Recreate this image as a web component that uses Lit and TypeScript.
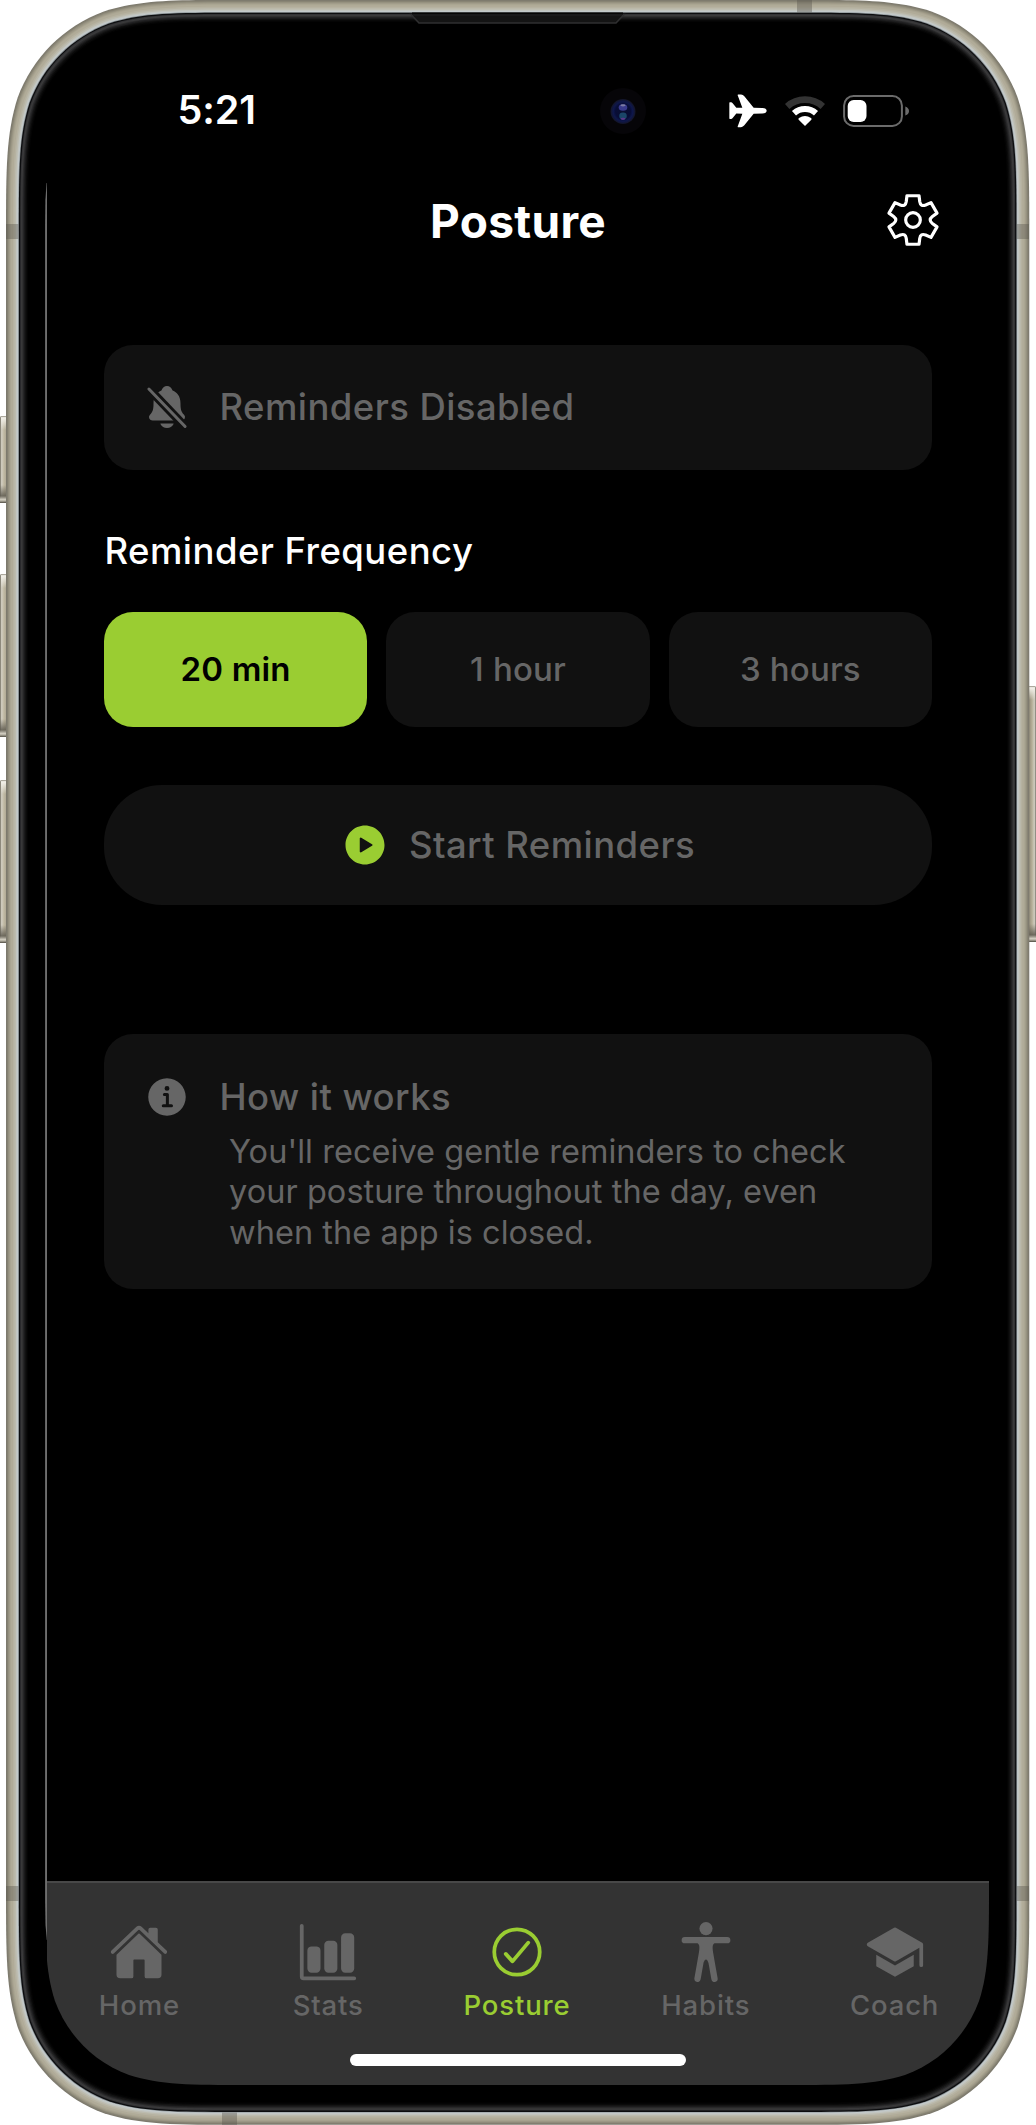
import { LitElement, html, svg, css, unsafeCSS } from "lit";
import { customElement, property, state } from "lit/decorators.js";

/** Rounded rectangle with continuous-curvature corners. */
function squircle(x: number, y: number, w: number, h: number, r: number): string {
  const a = 1.528665 * r, b = 1.08849296 * r, c = 0.86840694 * r, d = 0.63149379 * r;
  const e = 0.07491139 * r, f = 0.37282383 * r, g = 0.16905956 * r;
  const X = x + w, Y = y + h;
  const p = (m: number, n: number) => `${m.toFixed(2)} ${n.toFixed(2)}`;
  return [
    `M${p(x + a, y)}L${p(X - a, y)}`,
    `C${p(X - b, y)} ${p(X - c, y)} ${p(X - d, y + e)}`,
    `C${p(X - f, y + g)} ${p(X - g, y + f)} ${p(X - e, y + d)}`,
    `C${p(X, y + c)} ${p(X, y + b)} ${p(X, y + a)}`,
    `L${p(X, Y - a)}`,
    `C${p(X, Y - b)} ${p(X, Y - c)} ${p(X - e, Y - d)}`,
    `C${p(X - g, Y - f)} ${p(X - f, Y - g)} ${p(X - d, Y - e)}`,
    `C${p(X - c, Y)} ${p(X - b, Y)} ${p(X - a, Y)}`,
    `L${p(x + a, Y)}`,
    `C${p(x + b, Y)} ${p(x + c, Y)} ${p(x + d, Y - e)}`,
    `C${p(x + f, Y - g)} ${p(x + g, Y - f)} ${p(x + e, Y - d)}`,
    `C${p(x, Y - c)} ${p(x, Y - b)} ${p(x, Y - a)}`,
    `L${p(x, y + a)}`,
    `C${p(x, y + b)} ${p(x, y + c)} ${p(x + e, y + d)}`,
    `C${p(x + g, y + f)} ${p(x + f, y + g)} ${p(x + d, y + e)}`,
    `C${p(x + c, y)} ${p(x + b, y)} ${p(x + a, y)}Z`,
  ].join("");
}

/** Six-tooth gear outline around the origin. */
function gear(): string {
  const pt = (r: number, deg: number) => {
    const t = ((deg - 90) * Math.PI) / 180;
    return `${(r * Math.cos(t)).toFixed(2)} ${(r * Math.sin(t)).toFixed(2)}`;
  };
  let d = "";
  for (let k = 0; k < 6; k++) {
    const a = k * 60;
    d += `${k ? "L" : "M"}${pt(59, a - 20)}L${pt(75, a - 14)}L${pt(75, a + 14)}L${pt(59, a + 20)}`;
    d += `Q${pt(45, a + 30)} ${pt(59, a + 40)}`;
  }
  return d + "Z";
}

const SCREEN_CLIP = squircle(0, 0, 944, 2045, 133);

const ICONS: Record<string, unknown> = {
  home: svg`<path d="M261.56 101.28a8 8 0 00-11.06 0L66.4 277.15a8 8 0 00-2.47 5.79L63.9 448a32 32 0 0032 32H192a16 16 0 0016-16V328a8 8 0 018-8h80a8 8 0 018 8v136a16 16 0 0016 16h96.06a32 32 0 0032-32V282.94a8 8 0 00-2.47-5.79z"/><path d="M490.91 244.15l-74.8-71.56V64a16 16 0 00-16-16h-48a16 16 0 00-16 16v32l-57.92-55.38C272.77 35.14 264.71 32 256 32c-8.68 0-16.72 3.14-22.14 8.63l-212.7 203.5c-6.22 6-7 15.87-1.34 22.37A16 16 0 0043 267.56L250.5 69.28a8 8 0 0111.06 0l207.52 198.28a16 16 0 0022.59-.44c6.14-6.36 5.63-16.86-.76-22.97z"/>`,
  stats: svg`<path d="M480 496H48a32 32 0 01-32-32V32a16 16 0 0132 0v432h432a16 16 0 010 32z"/><path d="M156 432h-40a36 36 0 01-36-36V244a36 36 0 0136-36h40a36 36 0 0136 36v152a36 36 0 01-36 36zM300 432h-40a36 36 0 01-36-36V196a36 36 0 0136-36h40a36 36 0 0136 36v200a36 36 0 01-36 36zM443.64 432h-40a36 36 0 01-36-36V132a36 36 0 0136-36h40a36 36 0 0136 36v264a36 36 0 01-36 36z"/>`,
  posture: svg`<g fill="none" stroke="currentColor" stroke-width="32" stroke-linecap="round" stroke-linejoin="round"><circle cx="256" cy="256" r="194"/><path d="M352 176L217.6 336 160 272"/></g>`,
  habits: svg`<circle cx="256" cy="56" r="56"/><path d="M437,128H75a27,27,0,0,0,0,54H176.88c6.91,0,15,3.09,19.58,15,5.35,13.83,2.73,40.54-.57,61.23l-4.32,24.45a.42.42,0,0,1-.12.35l-34.6,196.81A27.43,27.43,0,0,0,179,511.58a27.06,27.06,0,0,0,31.42-22.29l23.91-136.8S242,320,256,320c14.23,0,21.74,32.49,21.74,32.49l23.92,136.92a27.24,27.24,0,1,0,53.62-9.6L320.66,283a.45.45,0,0,0-.11-.35l-4.33-24.45c-3.3-20.69-5.92-47.4-.57-61.23,4.56-11.88,12.91-15,19.26-15H437a27,27,0,0,0,0-54Z"/>`,
  coach: svg`<path d="M256 370.43L96 279v98.42l160 88.88 160-88.88V279z"/><path d="M264 49.5a16 16 0 00-16 0L23.500 178a16 16 0 000 28L248 334a16 16 0 0016 0l200-114.300V368a16 16 0 0032 0V192a16 16 0 00-8-14z"/>`,
  play: svg`<path d="M256 48C141.31 48 48 141.31 48 256s93.31 208 208 208 208-93.31 208-208S370.69 48 256 48zm74.77 217.3l-114.45 69.14a10.78 10.78 0 01-16.32-9.31V186.87a10.78 10.78 0 0116.32-9.31l114.45 69.14a10.89 10.89 0 010 18.6z"/>`,
  info: svg`<path d="M256 56C145.72 56 56 145.72 56 256s89.72 200 200 200 200-89.72 200-200S366.28 56 256 56zm0 82a26 26 0 11-26 26 26 26 0 0126-26zm48 226h-88a16 16 0 010-32h28v-88h-16a16 16 0 010-32h32a16 16 0 0116 16v104h28a16 16 0 010 32z"/>`,
  bellOff: svg`<mask id="cut"><rect width="512" height="512" fill="#fff"/><path d="M20 16L492 512" stroke="#000" stroke-width="92"/></mask><path mask="url(#cut)" d="M440.08 341.31c-1.66-2-3.29-4-4.89-5.93-22-26.61-35.31-42.67-35.31-118 0-39-9.33-71-27.72-95-13.56-17.73-31.89-31.18-56.05-41.12a3 3 0 01-.82-.67C306.6 51.49 282.82 32 256 32s-50.59 19.49-59.28 48.56a3.13 3.13 0 01-.81.65c-56.38 23.21-83.78 67.74-83.78 136.14 0 75.36-13.29 91.42-35.31 118-1.6 1.93-3.23 3.89-4.89 5.93a35.16 35.16 0 00-4.65 37.62c6.17 13 19.32 21.07 34.33 21.07H410.5c14.94 0 28-8.06 34.19-21a35.17 35.17 0 00-4.61-37.66z"/><path d="M256 480a80.06 80.06 0 0070.44-42.13 4 4 0 00-3.54-5.87H189.12a4 4 0 00-3.55 5.87A80.06 80.06 0 00256 480z"/><path d="M63 64L449 464" fill="none" stroke="currentColor" stroke-width="32" stroke-linecap="round"/>`,
};

@customElement("app-icon")
class AppIcon extends LitElement {
  @property() name = "";
  static styles = css`
    :host { display: block; flex: none; }
    .glyph { display: block; width: 100%; height: 100%; fill: currentColor; }
  `;
  render() {
    return html`<svg class="glyph" viewBox="0 0 512 512">${ICONS[this.name]}</svg>`;
  }
}

@customElement("phone-frame")
class PhoneFrame extends LitElement {
  static styles = css`
    :host { display: block; }
    .art { display: block; width: 1036px; height: 2125px; }
  `;
  // [inset from the outer edge, colour], painted outside in
  private layers: [number, string][] = [
    [0, "#7d7a6e"], [1, "#858172"], [2, "#938f7e"], [3, "#9f9a88"], [4, "#a9a491"],
    [5, "#b0ab98"], [7, "#b6b2a1"], [8.5, "#bcbbae"], [10, "#c2c5c0"], [11.2, "#c3cacb"],
    [12.2, "#8f9699"], [12.9, "#0c0d0f"], [14.2, "#333335"], [15.2, "#3a3a3b"], [16.4, "#2c2c2d"],
    [17.5, "#1f1f20"], [18.6, "#141414"], [19.8, "#0a0a0a"], [21, "#040404"], [22.2, "#000"],
  ];
  render() {
    const leftKeys = [[416, 503], [574, 737], [780, 943]];
    return html`<svg class="art" viewBox="0 0 1036 2125">
      <defs>
        <linearGradient id="key" x1="0" x2="1" y1="0" y2="0">
          <stop offset="0" stop-color="#6f6b5e"/><stop offset=".2" stop-color="#d3cfc2"/>
          <stop offset=".5" stop-color="#bfb8a2"/><stop offset="1" stop-color="#a29c89"/>
        </linearGradient>
        <linearGradient id="keyR" x1="0" x2="1" y1="0" y2="0">
          <stop offset="0" stop-color="#8a8473"/><stop offset=".5" stop-color="#b5ae97"/>
          <stop offset=".8" stop-color="#cfccbf"/><stop offset="1" stop-color="#77736a"/>
        </linearGradient>
        <linearGradient id="keyEnd" x1="0" x2="0" y1="0" y2="1">
          <stop offset="0" stop-color="#5f5b50" stop-opacity="0"/><stop offset=".6" stop-color="#5f5b50" stop-opacity=".85"/>
          <stop offset=".8" stop-color="#d0ccbf"/><stop offset=".88" stop-color="#b5b1a3"/><stop offset="1" stop-color="#4c493f"/>
        </linearGradient>
        <linearGradient id="keyTop" x1="0" x2="0" y1="0" y2="1">
          <stop offset="0" stop-color="#8d897c"/><stop offset=".12" stop-color="#f3f1ea"/><stop offset="1" stop-color="#f3f1ea" stop-opacity="0"/>
        </linearGradient>
        <radialGradient id="lens">
          <stop offset="0" stop-color="#0b1030"/><stop offset=".6" stop-color="#080d36"/>
          <stop offset=".78" stop-color="#0e174c"/><stop offset="1" stop-color="#141526"/>
        </radialGradient>
      </defs>
      ${leftKeys.map(([a, b]) => svg`
        <rect x="0" y=${a} width="8" height=${b - a} rx="1.5" fill="url(#key)"/>
        <rect x="1" y=${a} width="6" height="14" fill="url(#keyTop)"/>
        <rect x="0" y=${b - 18} width="7" height="18" fill="url(#keyEnd)"/>`)}
      <rect x="1028" y="686" width="8" height="256" rx="1.5" fill="url(#keyR)"/>
      <rect x="1029" y="686" width="6" height="14" fill="url(#keyTop)"/>
      <rect x="1029" y="924" width="7" height="18" fill="url(#keyEnd)"/>
      ${this.layers.map(([i, c]) => svg`<path fill=${c} d=${squircle(6 + i, i - 0.2, 1023.3 - 2 * i, 2125 - 2 * i, 155 - i * 0.95)}/>`)}
      <g fill="#55524a" opacity=".38">
        <rect x="6" y="224" width="12.5" height="15"/><rect x="1016.5" y="224" width="12.5" height="15"/>
        <rect x="6" y="1886" width="12.5" height="15"/><rect x="1016.5" y="1886" width="12.5" height="15"/>
        <rect x="797" y="0" width="15" height="12.5"/><rect x="222" y="2112.5" width="15" height="12.5"/>
      </g>
      <path d="M411 14.5L419 23H616L624 14.5Z" fill="#141414" stroke="#2f2f30" stroke-width="1.6"/>
      <path d="M412 13.6H623" stroke="#050505" stroke-width="2"/>
      <circle cx="623" cy="111" r="23" fill="#060508"/>
      <circle cx="623" cy="111.5" r="12.5" fill="url(#lens)"/>
      <ellipse cx="623" cy="107.5" rx="4.3" ry="3.2" fill="#393a8c"/>
      <ellipse cx="623" cy="105.3" rx="2.6" ry="1.1" fill="#7c7ca2"/>
      <ellipse cx="623" cy="116" rx="3.8" ry="3.4" fill="#1a4668"/>
      <ellipse cx="623" cy="118.8" rx="2.4" ry="1.1" fill="#5c378a"/>
      <path d="M46.6 183L45.4 200L45.1 225V1900L45.5 1925L46.8 1940H47V183Z" fill="#6e6e6e"/>
    </svg>`;
  }
}

interface Tab { id: string; label: string; }

@customElement("app-root")
class AppRoot extends LitElement {
  @state() private frequency = "20 min";
  @state() private active = "posture";
  private options = ["20 min", "1 hour", "3 hours"];
  private tabs: Tab[] = [
    { id: "home", label: "Home" }, { id: "stats", label: "Stats" }, { id: "posture", label: "Posture" },
    { id: "habits", label: "Habits" }, { id: "coach", label: "Coach" },
  ];

  static styles = css`
    :host { display: block; }
    .phone { position: relative; box-sizing: border-box; width: 1036px; height: 2125px; padding: 40px 47px 40px 45px; background: #fff; overflow: hidden; font-family: Inter, "Liberation Sans", sans-serif; }
    .frame { position: absolute; inset: 0; }
    .screen { position: relative; display: flex; flex-direction: column; height: 2045px; width: 944px; color: #666; clip-path: path("${unsafeCSS(SCREEN_CLIP)}"); }
    .status { display: flex; align-items: center; height: 142px; padding: 0 79px 0 132.5px; color: #fff; }
    .time { font-size: 39.5px; font-weight: 600; letter-spacing: -0.1px; margin-right: auto; padding-bottom: 2px; }
    .status-icons { display: flex; align-items: center; gap: 18px; }
    .status-icons svg { display: block; }
    .header { display: grid; grid-template-columns: 1fr auto 1fr; align-items: center; height: 76px; padding: 0 49px 0 51px; color: #fff; }
    .title { grid-column: 2; margin: 0; padding-top: 2px; font-size: 46px; font-weight: 700; line-height: 54px; letter-spacing: 0.3px; }
    .gear { justify-self: end; display: block; width: 54px; height: 54px; }
    .content { display: flex; flex-direction: column; padding: 87px 57px 0 59px; }
    .card { background: #111; border-radius: 29px; }
    .notice { display: flex; align-items: center; gap: 29px; height: 124.5px; box-sizing: border-box; padding-left: 38.5px; }
    .icon { width: 48px; height: 48px; }
    .strong { font-size: 36.5px; font-weight: 500; line-height: 44px; letter-spacing: 0.43px; }
    .label { margin-top: 59px; font-size: 36.5px; font-weight: 500; line-height: 44px; letter-spacing: 0.45px; color: #fff; padding-left: 0.5px; }
    .options { display: grid; grid-template-columns: repeat(3, 1fr); gap: 19.2px; margin-top: 39.5px; }
    .option { border: 0; height: 115px; padding: 0 0 1px; font: inherit; font-size: 33px; font-weight: 500; letter-spacing: 0.15px; color: #666; }
    .option.selected { background: #9acd32; color: #000; font-weight: 600; }
    .start { display: flex; align-items: center; justify-content: center; gap: 20px; border: 0; font-family: inherit; color: #666; height: 120px; margin-top: 57.7px; border-radius: 58px; padding: 0; }
    .accent { color: #9acd32; }
    .how { box-sizing: border-box; height: 255px; margin-top: 129.3px; padding: 39px 0 0 38.5px; }
    .how-head { display: flex; align-items: center; gap: 29px; height: 48px; }
    .how-text { margin: 11px 0 0 86.5px; font-size: 32.5px; line-height: 40.4px; letter-spacing: 0.04px; white-space: nowrap; }
    .tabbar { margin-top: auto; box-sizing: border-box; height: 204.5px; border-top: 2px solid #484848; background: #333; display: flex; flex-direction: column; align-items: center; margin-left: 1.5px; }
    .tabs { display: grid; grid-template-columns: repeat(5, 1fr); align-self: stretch; margin-left: -1.5px; padding-top: 39px; }
    .tab { display: flex; flex-direction: column; align-items: center; gap: 7.5px; border: 0; padding: 0; background: none; font-family: inherit; color: #666; }
    .tab.active { color: #9acd32; }
    .tab-icon { width: 60px; height: 60px; }
    .tab-label { font-size: 27.5px; font-weight: 500; line-height: 32px; letter-spacing: 0.85px; }
    .indicator { width: 336.5px; height: 12.3px; border-radius: 6.2px; background: #fff; margin-top: 32.5px; }
  `;

  render() {
    return html`<div class="phone">
      <phone-frame class="frame"></phone-frame>
      <main class="screen">
        <div class="status">
          <span class="time">5:21</span>
          <div class="status-icons">
            <svg width="38" height="34" viewBox="0 0 114 102"><path fill="#fff" d="M113 50.5Q113 58 100 58.5L74 59.5L46 94Q42 99.5 36 99.5L27 99.5Q25.5 99.5 26 97.5L40 59.5L22 58.5L11 72Q9 75 6 75L2.5 75Q1 75 1 73V27Q1 25 2.500 25L6 25Q9 25 11 28L22 41.5L40 41L26 4Q25.5 1.5 27 1.5L36 1.5Q42 1.5 46 7L74 41L100 42Q113 43 113 50.5Z"/></svg>
            <svg width="40" height="32" viewBox="0 0 120 96"><g fill="none" stroke="#fff"><path stroke="#333" stroke-width="20" d="M6.5 34.5A80 80 0 0 1 113.5 34.5"/><path stroke-width="18" d="M27 54.5A49 49 0 0 1 93 54.5"/></g><path fill="#fff" d="M60 93L41 74Q39 71 42 69Q60 57 78 69Q81 71 79 74Z"/></svg>
            <svg width="67" height="34" viewBox="0 0 67 34"><rect x="1.1" y="1.9" width="57.8" height="30" rx="9.5" fill="none" stroke="#6b6b6b" stroke-width="2"/><rect x="4.700" y="6" width="18.8" height="22" rx="6" fill="#fff"/><path d="M62.3 12.5Q66 14 66 17T62.3 21.5Z" fill="#6b6b6b"/></svg>
          </div>
        </div>
        <header class="header">
          <h1 class="title">Posture</h1>
          <svg class="gear" viewBox="-81 -81 162 162"><g fill="none" stroke="#fff" stroke-width="9.5" stroke-linejoin="round"><path d=${gear()}/><circle r="22"/></g></svg>
        </header>
        <section class="content">
          <div class="card notice"><app-icon class="icon" name="bellOff"></app-icon><span class="strong">Reminders Disabled</span></div>
          <div class="label">Reminder Frequency</div>
          <div class="options">
            ${this.options.map((o) => html`<button class="card option ${o === this.frequency ? "selected" : ""}" @click=${() => (this.frequency = o)}>${o}</button>`)}
          </div>
          <button class="card start"><app-icon class="icon accent" name="play"></app-icon><span class="strong">Start Reminders</span></button>
          <div class="card how">
            <div class="how-head"><app-icon class="icon" name="info"></app-icon><span class="strong">How it works</span></div>
            <p class="how-text">You'll receive gentle reminders to check<br>your posture throughout the day, even<br>when the app is closed.</p>
          </div>
        </section>
        <footer class="tabbar">
          <nav class="tabs">
            ${this.tabs.map((t) => html`<button class="tab ${t.id === this.active ? "active" : ""}" @click=${() => (this.active = t.id)}>
              <app-icon class="tab-icon" name=${t.id}></app-icon><span class="tab-label">${t.label}</span></button>`)}
          </nav>
          <div class="indicator"></div>
        </footer>
      </main>
    </div>`;
  }
}
